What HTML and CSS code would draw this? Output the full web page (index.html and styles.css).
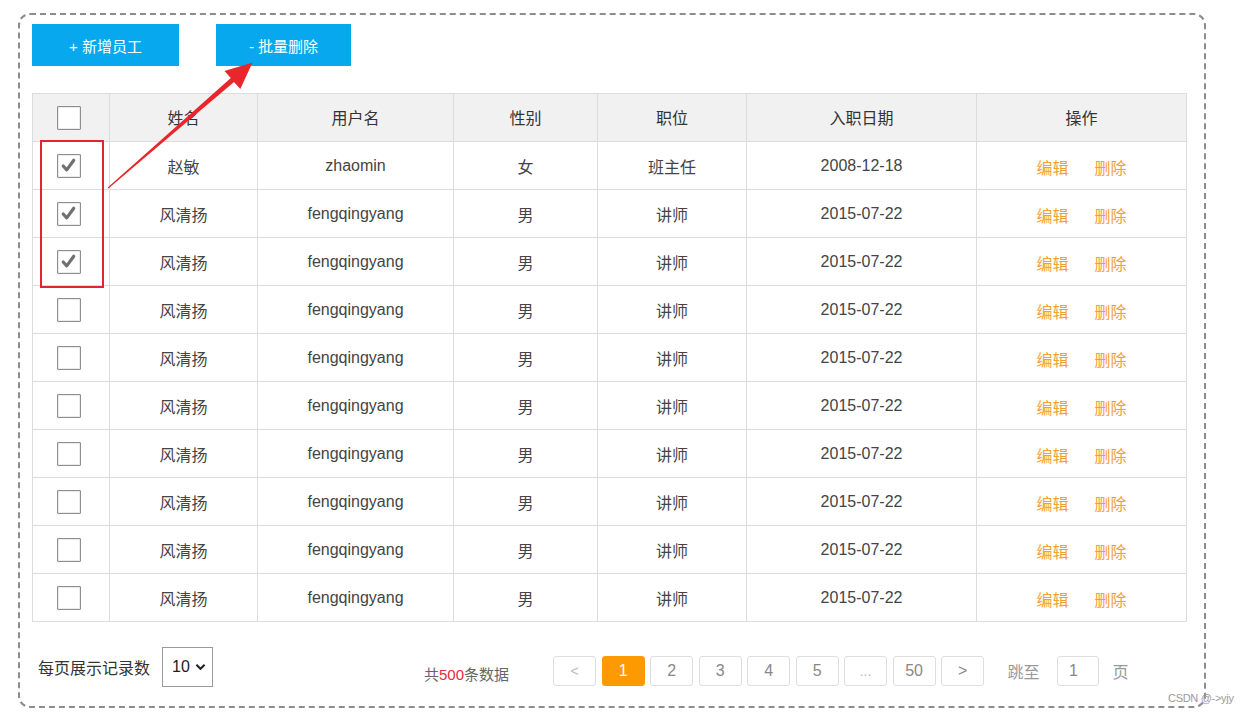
FILE: index.html
```html
<!DOCTYPE html>
<html lang="zh">
<head>
<meta charset="utf-8">
<title>员工管理</title>
<link rel="stylesheet" href="styles.css">
</head>
<body>
<div class="panel">
  <div class="toolbar">
    <button class="btn btn-add">+ 新增员工</button>
    <button class="btn btn-del">- 批量删除</button>
  </div>
  <table class="grid">
    <colgroup>
      <col class="c1"><col class="c2"><col class="c3"><col class="c4"><col class="c5"><col class="c6"><col class="c7">
    </colgroup>
    <thead>
      <tr><th class="chk"><span class="cb"></span></th><th>姓名</th><th>用户名</th><th>性别</th><th>职位</th><th>入职日期</th><th>操作</th></tr>
    </thead>
    <tbody>
      <tr><td class="chk"><span class="cb on"><svg viewBox="0 0 24 24"><path d="M6 12.5 L10 17 L18 6" /></svg></span></td><td>赵敏</td><td>zhaomin</td><td>女</td><td>班主任</td><td>2008-12-18</td><td><a class="op">编辑</a><a class="op">删除</a></td></tr>
      <tr><td class="chk"><span class="cb on"><svg viewBox="0 0 24 24"><path d="M6 12.5 L10 17 L18 6" /></svg></span></td><td>风清扬</td><td>fengqingyang</td><td>男</td><td>讲师</td><td>2015-07-22</td><td><a class="op">编辑</a><a class="op">删除</a></td></tr>
      <tr><td class="chk"><span class="cb on"><svg viewBox="0 0 24 24"><path d="M6 12.5 L10 17 L18 6" /></svg></span></td><td>风清扬</td><td>fengqingyang</td><td>男</td><td>讲师</td><td>2015-07-22</td><td><a class="op">编辑</a><a class="op">删除</a></td></tr>
      <tr><td class="chk"><span class="cb"></span></td><td>风清扬</td><td>fengqingyang</td><td>男</td><td>讲师</td><td>2015-07-22</td><td><a class="op">编辑</a><a class="op">删除</a></td></tr>
      <tr><td class="chk"><span class="cb"></span></td><td>风清扬</td><td>fengqingyang</td><td>男</td><td>讲师</td><td>2015-07-22</td><td><a class="op">编辑</a><a class="op">删除</a></td></tr>
      <tr><td class="chk"><span class="cb"></span></td><td>风清扬</td><td>fengqingyang</td><td>男</td><td>讲师</td><td>2015-07-22</td><td><a class="op">编辑</a><a class="op">删除</a></td></tr>
      <tr><td class="chk"><span class="cb"></span></td><td>风清扬</td><td>fengqingyang</td><td>男</td><td>讲师</td><td>2015-07-22</td><td><a class="op">编辑</a><a class="op">删除</a></td></tr>
      <tr><td class="chk"><span class="cb"></span></td><td>风清扬</td><td>fengqingyang</td><td>男</td><td>讲师</td><td>2015-07-22</td><td><a class="op">编辑</a><a class="op">删除</a></td></tr>
      <tr><td class="chk"><span class="cb"></span></td><td>风清扬</td><td>fengqingyang</td><td>男</td><td>讲师</td><td>2015-07-22</td><td><a class="op">编辑</a><a class="op">删除</a></td></tr>
      <tr><td class="chk"><span class="cb"></span></td><td>风清扬</td><td>fengqingyang</td><td>男</td><td>讲师</td><td>2015-07-22</td><td><a class="op">编辑</a><a class="op">删除</a></td></tr>
    </tbody>
  </table>
  <div class="footer">
    <div class="per-page">
      <span class="label">每页展示记录数</span>
      <div class="select"><span>10</span><svg viewBox="0 0 12 8"><path d="M1.5 1.5 L6 6 L10.5 1.5" /></svg></div>
    </div>
    <div class="total">共<em>500</em>条数据</div>
    <div class="pager">
      <span class="pg muted">&lt;</span>
      <span class="pg active">1</span>
      <span class="pg">2</span>
      <span class="pg">3</span>
      <span class="pg">4</span>
      <span class="pg">5</span>
      <span class="pg muted">...</span>
      <span class="pg">50</span>
      <span class="pg">&gt;</span>
      <span class="jump">跳至</span>
      <span class="pg input">1</span>
      <span class="jump page">页</span>
    </div>
  </div>
</div>
<svg class="annot" viewBox="0 0 1245 718" width="1245" height="718">
  <rect x="41" y="141" width="62" height="146" fill="none" stroke="#e3262b" stroke-width="2"/>
  <polygon fill="#e8262b" points="107.7,187.6 230.8,78.1 224.5,70.9 252.5,62.5 240.3,89.1 234,81.9 108.4,188.5"/>
</svg>
<div class="watermark">CSDN @-&gt;yjy</div>
</body>
</html>
```

FILE: styles.css
```css
* { box-sizing: border-box; }
html, body { margin: 0; padding: 0; background: #fff; }
body {
  width: 1245px;
  height: 718px;
  position: relative;
  overflow: hidden;
  font-family: "Liberation Sans", "Noto Sans CJK SC", Arial, sans-serif;
  color: #333;
}
.panel {
  margin: 13px 0 0 18px;
  width: 1188px;
  height: 695px;
  border: 2px dashed #8c8c8c;
  border-radius: 12px;
  padding: 9px 0 0 12px;
}
.toolbar {
  display: flex;
  gap: 37px;
  height: 42px;
}
.btn {
  border: 0;
  background: #08a8ee;
  color: #fff;
  font-family: "Liberation Sans", "Noto Sans CJK SC", sans-serif;
  font-size: 15px;
  height: 42px;
  padding: 0;
  cursor: pointer;
}
.btn-add { width: 147px; }
.btn-del { width: 135px; }
.grid {
  margin-top: 27px;
  width: 1154px;
  border-collapse: collapse;
  table-layout: fixed;
  font-size: 16px;
}
.c1 { width: 77px; }
.c2 { width: 148px; }
.c3 { width: 196px; }
.c4 { width: 144px; }
.c5 { width: 149px; }
.c6 { width: 230px; }
.c7 { width: 210px; }
.grid th, .grid td {
  border: 1px solid #dcdcdc;
  height: 48px;
  padding: 0;
  text-align: center;
  vertical-align: middle;
  font-weight: normal;
}
.grid th { background: #f1f1f1; color: #333; padding-bottom: 2px; }
.grid td { color: #444; }
.grid .chk { padding: 0 4px 0 0; }
.cb {
  display: inline-block;
  width: 24px;
  height: 24px;
  border: 1.5px solid #8e8e8e;
  border-radius: 1px;
  background: #fff;
  vertical-align: middle;
  box-shadow: inset 0 0 0 0.5px #d8d8d8;
}
.cb svg { width: 21px; height: 21px; display: block; }
.cb svg path { fill: none; stroke: #707070; stroke-width: 3.6; stroke-linecap: round; stroke-linejoin: round; }
.op {
  color: #fb9d36;
  display: inline-block;
  margin: 0 13px;
  position: relative;
  top: 1px;
}
.footer {
  display: flex;
  align-items: flex-start;
  margin-top: 25px;
}
.per-page {
  display: flex;
  align-items: center;
  height: 40px;
  margin-left: 6px;
}
.label { font-size: 16px; color: #333; }
.select {
  margin-left: 12px;
  width: 51px;
  height: 40px;
  border: 1.5px solid #9a9a9a;
  display: flex;
  align-items: center;
  padding-left: 9px;
  gap: 5px;
  font-size: 16px;
  color: #222;
}
.select svg { width: 11px; height: 8px; }
.select svg path { fill: none; stroke: #222; stroke-width: 2.2; }
.total {
  margin-left: 211px;
  margin-top: 16px;
  font-size: 15px;
  color: #666;
}
.total em { font-style: normal; color: #e8283c; }
.pager {
  display: flex;
  align-items: center;
  margin-left: 44px;
  margin-top: 9px;
  gap: 5.5px;
}
.pg {
  width: 43px;
  height: 30px;
  border: 1px solid #dedede;
  border-radius: 3px;
  display: flex;
  align-items: center;
  justify-content: center;
  font-size: 16px;
  color: #888;
  background: #fff;
}
.pg.muted { color: #bbb; font-size: 14px; }
.pg.active { background: #fd9a02; border-color: #fd9a02; color: #fff; }
.jump { font-size: 16px; color: #999; margin-left: 18px; margin-right: 12px; }
.jump.page { margin-left: 8px; }
.pg.input { width: 42px; justify-content: flex-start; padding-left: 11px; }
.annot {
  position: absolute;
  left: 0;
  top: 0;
  pointer-events: none;
}
.watermark {
  position: absolute;
  left: 1168px;
  top: 692px;
  font-size: 11px;
  color: #9a9a9a;
  font-family: "Liberation Sans", sans-serif;
  letter-spacing: -0.3px;
}
```
